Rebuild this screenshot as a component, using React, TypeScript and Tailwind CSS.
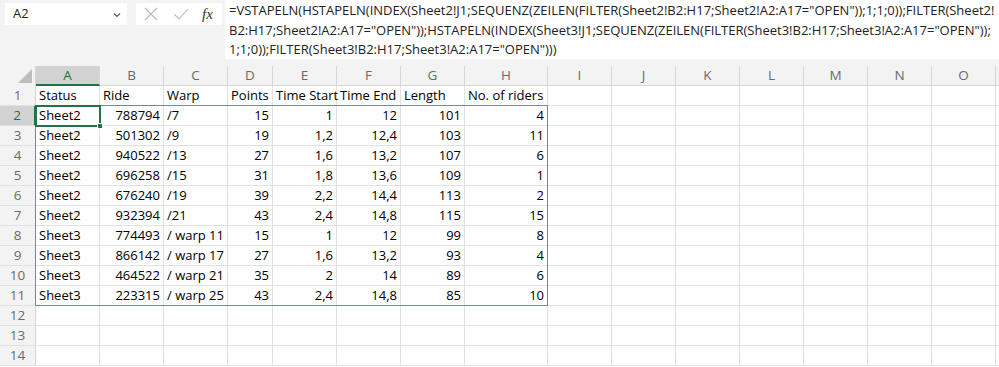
import React from "react";

const COLS = [
  { key: "A", w: "w-[64px]" },
  { key: "B", w: "w-[64px]" },
  { key: "C", w: "w-[64px]" },
  { key: "D", w: "w-[45px]" },
  { key: "E", w: "w-[64px]" },
  { key: "F", w: "w-[64px]" },
  { key: "G", w: "w-[64px]" },
  { key: "H", w: "w-[83px]" },
  { key: "I", w: "w-[64px]" },
  { key: "J", w: "w-[64px]" },
  { key: "K", w: "w-[64px]" },
  { key: "L", w: "w-[64px]" },
  { key: "M", w: "w-[64px]" },
  { key: "N", w: "w-[64px]" },
  { key: "O", w: "w-[64px]" },
] as const;

type Cell = string | number;

const HEADER: Cell[] = ["Status", "Ride", "Warp", "Points", "Time Start", "Time End", "Length", "No. of riders"];

const ROWS: Cell[][] = [
  ["Sheet2", 788794, "/7", 15, 1, 12, 101, 4],
  ["Sheet2", 501302, "/9", 19, "1,2", "12,4", 103, 11],
  ["Sheet2", 940522, "/13", 27, "1,6", "13,2", 107, 6],
  ["Sheet2", 696258, "/15", 31, "1,8", "13,6", 109, 1],
  ["Sheet2", 676240, "/19", 39, "2,2", "14,4", 113, 2],
  ["Sheet2", 932394, "/21", 43, "2,4", "14,8", 115, 15],
  ["Sheet3", 774493, "/ warp 11", 15, 1, 12, 99, 8],
  ["Sheet3", 866142, "/ warp 17", 27, "1,6", "13,2", 93, 4],
  ["Sheet3", 464522, "/ warp 21", 35, 2, 14, 89, 6],
  ["Sheet3", 223315, "/ warp 25", 43, "2,4", "14,8", 85, 10],
];

const FORMULA = [
  '=VSTAPELN(HSTAPELN(INDEX(Sheet2!J1;SEQUENZ(ZEILEN(FILTER(Sheet2!B2:H17;Sheet2!A2:A17="OPEN"));1;1;0));FILTER(Sheet2!',
  'B2:H17;Sheet2!A2:A17="OPEN"));HSTAPELN(INDEX(Sheet3!J1;SEQUENZ(ZEILEN(FILTER(Sheet3!B2:H17;Sheet3!A2:A17="OPEN"));',
  '1;1;0));FILTER(Sheet3!B2:H17;Sheet3!A2:A17="OPEN")))',
];

function isNumeric(v: Cell) {
  return typeof v === "number" || /^\d+(,\d+)?$/.test(v);
}

function FormulaBar() {
  return (
    <div className="flex h-[66px] bg-[#f3f3f3]">
      {/* name box */}
      <div className="ml-[5px] mt-[3px] flex h-[22px] w-[122px] items-center justify-between bg-white pl-[8px] pr-[6px] text-[13px] text-[#222]">
        <span>A2</span>
        <svg width="8" height="6" viewBox="0 0 8 6" className="mt-[1px]">
          <path d="M1 1.5 L4 4.5 L7 1.5" fill="none" stroke="#555" strokeWidth="1.2" />
        </svg>
      </div>
      {/* cancel / enter / fx */}
      <div className="ml-[9px] mt-[3px] flex h-[22px] w-[86px] items-center bg-white">
        <svg width="16" height="16" viewBox="0 0 16 16" className="ml-[7px]">
          <path d="M2 2 L14 14 M14 2 L2 14" stroke="#b9b9b9" strokeWidth="1.1" />
        </svg>
        <svg width="16" height="16" viewBox="0 0 16 16" className="ml-[14px]">
          <path d="M1.5 8.5 L6 13 L15 3" fill="none" stroke="#b9b9b9" strokeWidth="1.1" />
        </svg>
        <span className="ml-[13px] font-['Liberation_Serif',serif] text-[15px] italic text-[#333]">fx</span>
      </div>
      {/* formula text */}
      <div className="ml-[3px] h-[59px] flex-1 overflow-hidden bg-white pl-[4px] pt-[1px] text-[13px] leading-[19.5px] text-[#222]">
        {FORMULA.map((line) => (
          <div key={line} className="whitespace-nowrap">
            {line}
          </div>
        ))}
      </div>
    </div>
  );
}

function ColumnHeaders() {
  return (
    <div className="flex h-[20px] bg-[#f3f3f3] text-[13.5px] text-[#6a6a6a]">
      <div className="relative w-[36px] shrink-0 border-r border-[#d6d6d6]">
        <svg width="14" height="14" viewBox="0 0 14 14" className="absolute bottom-[3px] right-[3px]">
          <path d="M14 0 L14 14 L0 14 Z" fill="#bdbdbd" />
        </svg>
      </div>
      {COLS.map((c) => (
        <div
          key={c.key}
          className={`${c.w} flex shrink-0 items-center justify-center border-r border-[#d6d6d6] ${
            c.key === "A"
              ? "border-b-2 border-b-[#217346] bg-[#d2d2d2] text-[#1e6b40]"
              : "border-b border-b-[#d6d6d6]"
          }`}
        >
          {c.key}
        </div>
      ))}
      <div className="flex-1 border-b border-[#d6d6d6]" />
    </div>
  );
}

function GridRow({ n, values, header }: { n: number; values: Cell[]; header?: boolean }) {
  const selected = n === 2;
  return (
    <div className="flex h-[20px]">
      <div
        className={`flex w-[36px] shrink-0 items-center justify-center text-[13.5px] ${
          selected
            ? "border-r-2 border-r-[#217346] bg-[#d2d2d2] text-[#1e6b40]"
            : "border-r border-r-[#d6d6d6] bg-[#f3f3f3] text-[#6a6a6a]"
        } border-b border-b-[#e1e1e1]`}
      >
        {n}
      </div>
      {COLS.map((c, i) => {
        const v = values[i];
        const right = v !== undefined && !header && isNumeric(v);
        return (
          <div
            key={c.key}
            className={`${c.w} flex shrink-0 items-center overflow-visible whitespace-nowrap border-b border-r border-[#e1e1e1] px-[3px] pt-[1px] text-[13px] text-black ${
              right ? "justify-end" : "justify-start"
            }`}
          >
            {v}
          </div>
        );
      })}
      <div className="flex-1 border-b border-[#e1e1e1]" />
    </div>
  );
}

export default function App() {
  const rows: { n: number; values: Cell[]; header?: boolean }[] = [
    { n: 1, values: HEADER, header: true },
    ...ROWS.map((r, i) => ({ n: i + 2, values: r })),
    { n: 12, values: [] },
    { n: 13, values: [] },
    { n: 14, values: [] },
  ];

  return (
    <div className="h-[367px] w-[999px] overflow-hidden bg-white font-['Open_Sans','Noto_Sans',sans-serif]">
      <FormulaBar />
      <ColumnHeaders />
      <div className="relative">
        {rows.map((r) => (
          <GridRow key={r.n} n={r.n} values={r.values} header={r.header} />
        ))}
        {/* spill range A2:H11 */}
        <div className="pointer-events-none absolute left-[35px] top-[19px] h-[201px] w-[513px] border border-[#7589a0]" />
        {/* active cell A2 */}
        <div className="pointer-events-none absolute left-[35px] top-[19px] h-[22px] w-[66px] border-2 border-[#217346]">
          <div className="absolute -bottom-[4px] -right-[4px] h-[6px] w-[6px] border border-white bg-[#217346]" />
        </div>
      </div>
    </div>
  );
}
